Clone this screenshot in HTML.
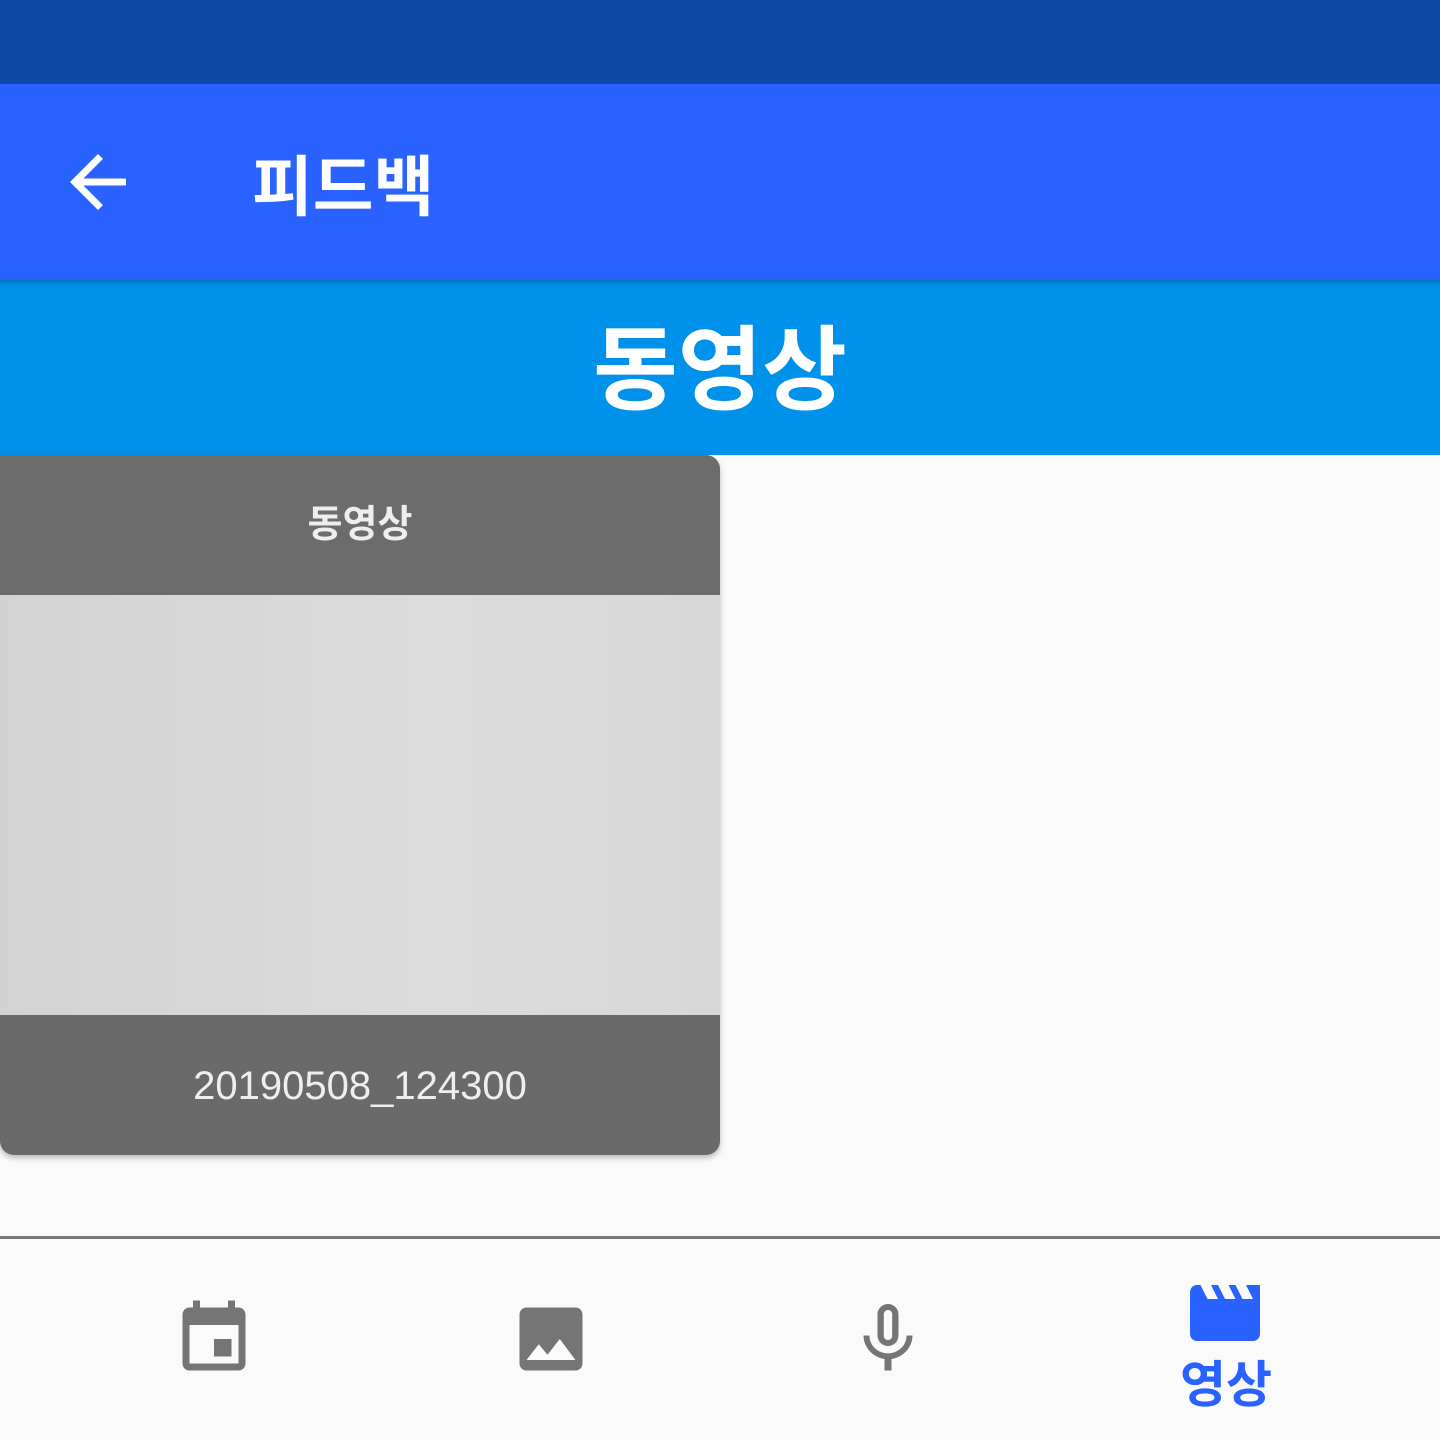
<!DOCTYPE html>
<html><head><meta charset="utf-8"><style>
*{margin:0;padding:0;box-sizing:border-box}
body{width:1440px;height:1440px;background:#fafafa;font-family:"Liberation Sans","Noto Sans CJK KR",sans-serif;position:relative;overflow:hidden}
.status{position:absolute;top:0;left:0;width:1440px;height:84px;background:#0f47a6}
.appbar{position:absolute;top:84px;left:0;width:1440px;height:196px;background:#2962ff}
.appbar .title{position:absolute;left:252px;top:98px;transform:translateY(-50%);color:#fff;font-size:66px;font-weight:bold}
.back{position:absolute;left:56px;top:56px}
.sub{position:absolute;top:280px;left:0;width:1440px;height:175px;background:#0091ea;box-shadow:inset 0 6px 6px -4px rgba(0,0,0,.25)}
.sub div{text-align:center;color:#fff;font-size:92px;font-weight:bold;line-height:175px;position:relative;top:4px}
.card{position:absolute;left:0;top:455px;width:720px;height:700px;border-radius:0 0 14px 14px;border-top-right-radius:14px;overflow:hidden;box-shadow:0 3px 6px rgba(0,0,0,.25);background:linear-gradient(90deg,#d3d3d3,#dcdcdc 60%,#d8d8d8)}
.card .top{position:absolute;top:0;left:0;width:720px;height:140px;background:#6c6c6c;color:#eee;font-size:38px;font-weight:bold;text-align:center;line-height:140px}
.card .bot{position:absolute;bottom:0;left:0;width:720px;height:140px;background:#6a6a6a;color:#eee;font-size:40px;text-align:center;line-height:142px}
.nav{position:absolute;top:1236px;left:0;width:1440px;height:204px;background:#fafafa;border-top:3px solid #7a7a7a}
.nav svg{position:absolute}
.nav .lbl{position:absolute;left:1180px;top:106px;color:#2962ff;font-size:50px;font-weight:bold}
</style></head><body>
<div class="status"></div>
<div class="appbar">
<svg class="back" width="84" height="84" viewBox="0 0 24 24"><path fill="#fff" d="M20 11H7.83l5.59-5.59L12 4l-8 8 8 8 1.41-1.41L7.83 13H20v-2z"/></svg>
<div class="title">피드백</div>
</div>
<div class="sub"><div>동영상</div></div>
<div class="card"><div class="top">동영상</div><div class="bot">20190508_124300</div></div>
<div class="nav">
<svg style="left:172px;top:58px" width="84" height="84" viewBox="0 0 24 24"><path fill="#757575" d="M17 12h-5v5h5v-5zM16 1v2H8V1H6v2H5c-1.11 0-1.990.9-1.99 2L3 19c0 1.1.89 2 2 2h14c1.1 0 2-.9 2-2V5c0-1.1-.9-2-2-2h-1V1h-2zm3 18H5V8h14v11z"/></svg>
<svg style="left:509px;top:58px" width="84" height="84" viewBox="0 0 24 24"><path fill="#757575" d="M21 19V5c0-1.1-.9-2-2-2H5c-1.1 0-2 .9-2 2v14c0 1.1.9 2 2 2h14c1.1 0 2-.9 2-2zM8.5 13.5l2.5 3.01L14.5 12l4.5 6H5l3.5-4.5z"/></svg>
<svg style="left:846px;top:58px" width="84" height="84" viewBox="0 0 24 24"><path fill="#757575" d="M12 14c1.66 0 2.99-1.34 2.99-3L15 5c0-1.66-1.34-3-3-3S9 3.34 9 5v6c0 1.66 1.34 3 3 3zm-1.2-9.1c0-.66.54-1.2 1.2-1.2.66 0 1.2.54 1.2 1.200l-.01 6.2c0 .66-.53 1.2-1.19 1.2-.66 0-1.2-.54-1.2-1.2V4.9zm6.5 6.1c0 3-2.54 5.1-5.3 5.1S6.700 14 6.700 11H5c0 3.41 2.72 6.23 6 6.72V21h2v-3.28c3.28-.48 6-3.3 6-6.72h-1.7z"/></svg>
<svg style="left:1183px;top:32px" width="84" height="84" viewBox="0 0 24 24"><path fill="#2962ff" d="M18 4l2 4h-3l-2-4h-2l2 4h-3l-2-4H8l2 4H7L5 4H4c-1.1 0-1.99.9-1.99 2L2 18c0 1.1.9 2 2 2h16c1.1 0 2-.9 2-2V4h-4z"/></svg>
<div class="lbl">영상</div>
</div>
</body></html>
